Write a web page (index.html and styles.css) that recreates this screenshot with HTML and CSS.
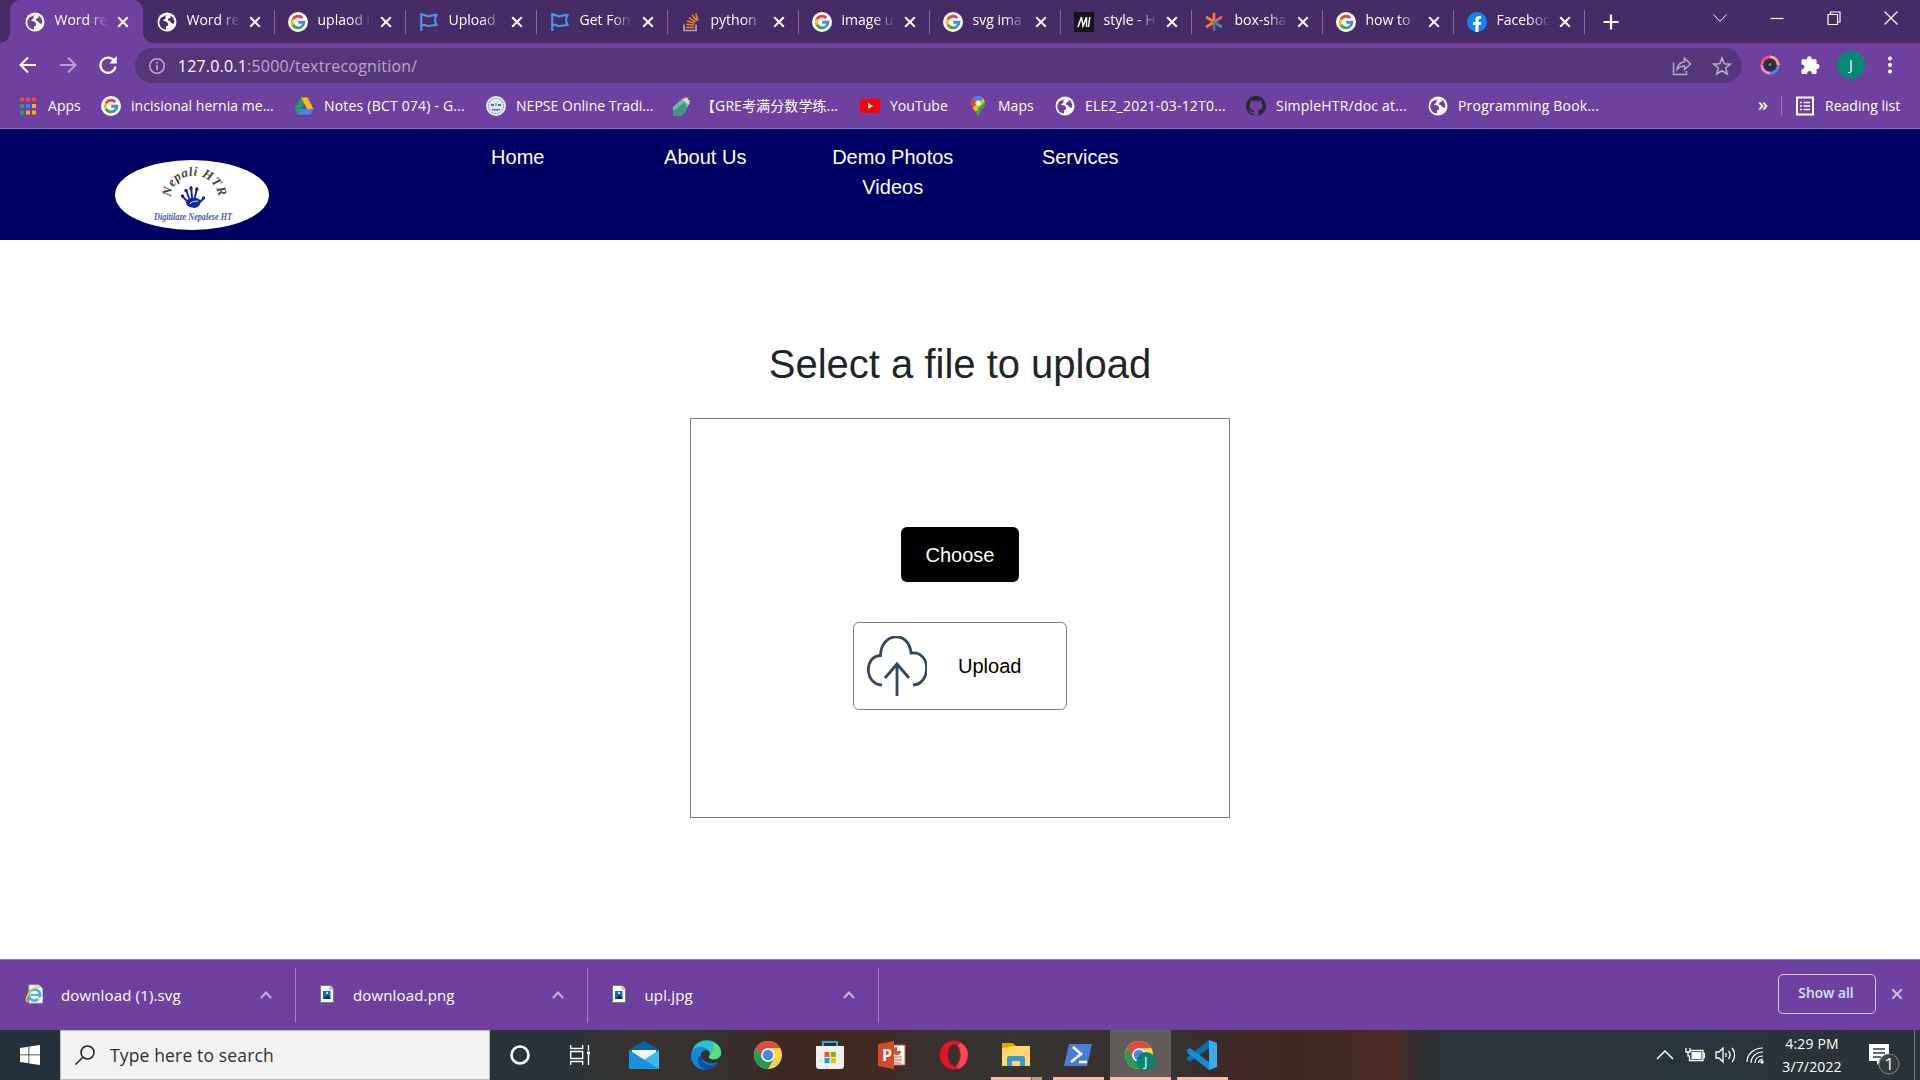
FILE: index.html
```html
<!DOCTYPE html>
<html lang="en">
<head>
<meta charset="utf-8">
<title>Word recognition</title>
<link rel="stylesheet" href="styles.css">
</head>
<body>
<svg class="sprites" width="0" height="0" aria-hidden="true">
  <symbol id="globe" viewBox="0 0 20 20"><circle cx="10" cy="10" r="9.500" fill="#fff"/><path d="M11.500 2.200 8.500 4v2.500L5.800 8.700 9.500 9.600l1.500 2v1.800l-2 1.200v2.900C4.500 17.500 2 13.500 2.300 9.200L4 5.500zM13 3.200l3 2.400 1.500 4-1.200 2.700-2.100-1.500-1.500-1.700-2-.6 1-2.300 2.300-.6z" fill="currentColor"/></symbol>
  <symbol id="google" viewBox="0 0 20 20"><circle cx="10" cy="10" r="10" fill="#fff"/><g fill="none" stroke-width="2.900"><path d="M14.300 6A5.900 5.900 0 0 0 4.900 7.200" stroke="#ea4335"/><path d="M4.900 7.200a5.900 5.900 0 0 0 0 5.600" stroke="#fbbc05"/><path d="M4.900 12.800a5.900 5.900 0 0 0 9 1.700" stroke="#34a853"/><path d="M13.900 14.500a5.800 5.800 0 0 0 2-4.200H10.200" stroke="#4285f4"/></g></symbol>
  <symbol id="flag" viewBox="0 0 20 20"><path d="M2.200 1v18M2.200 3.500c3-2 5 1.500 8 .8 2.500-.6 4-1.600 7.300-1.300-2 3.500-2 6.500 0 10-4 0-4.500.8-7.500 1s-4-2.200-7.800-.5" fill="none" stroke="#4a94e6" stroke-width="2.200"/></symbol>
  <symbol id="stack" viewBox="0 0 20 20"><path d="M3 12.500V18.500H15V12.500" fill="none" stroke="#a9a6b4" stroke-width="1.700"/><path d="M5 15.500h8M5.100 12.300l8 .9M6 8.900l7.500 2.400M8 5.600l6.500 4.300M11 2.800l4.900 6M14.800 1.500l2 7.300" stroke="#f48024" stroke-width="1.600"/></symbol>
  <symbol id="mlogo" viewBox="0 0 20 20"><path d="M0 0h20v20H0z" fill="#15141a"/><path d="M4 15 7.500 5l1.500 9L12.500 5v10M15.800 5l-1.300 10" fill="none" stroke="#fff" stroke-width="1.500"/></symbol>
  <symbol id="spark" viewBox="0 0 20 20"><g stroke-width="2.700" stroke-linecap="round"><path d="M9 10V2" stroke="#ff774b"/><path d="M9 10V18" stroke="#8a5c91"/><path d="M9 10 2 5.500M9 10 2 14.500" stroke="#ff7b2e"/><path d="M9 10l7-4.500" stroke="#ee5b63"/><path d="m9 10 7 4.500" stroke="#2f9ba2"/></g></symbol>
  <symbol id="facebook" viewBox="0 0 20 20"><circle cx="10" cy="10" r="10" fill="#0e86f5"/><path d="M8.400 20v-7H6v-2.900h2.400V8c0-2.600 1.500-3.900 3.800-3.900l2 .2v2.500h-1.200c-1.100 0-1.500.7-1.500 1.500v1.800h2.700L13.700 13h-2.200v7z" fill="#fff"/></symbol>
  <symbol id="x" viewBox="0 0 12 12"><path d="m1.200 1.200 9.600 9.600m0-9.600-9.600 9.600" fill="none" stroke="currentColor" stroke-width="2"/></symbol>
  <symbol id="chev" viewBox="0 0 14 10"><path d="m2 8 5-5.500L12 8" fill="none" stroke="currentColor" stroke-width="2"/></symbol>
  <symbol id="picfile" viewBox="0 0 20 20"><path d="M1.500 1.500h9.500l3.500 3.500v13.500h-13z" fill="#fff" stroke="#777b76"/><path d="M11 1.500V5h3.500" fill="#eee" stroke="#999"/><path d="M4 7h7.500v8H4z" fill="#126ab1"/><path d="m4 15 4.500-4 3 3v1z" fill="#062e64"/><circle cx="8" cy="9" r="1.200" fill="#9eefff"/></symbol>
  <symbol id="chrome" viewBox="0 0 28 28"><circle cx="14" cy="14" r="14" fill="#ffd34d"/><path d="M1.900 7A14 14 0 0 1 26.100 7H14a7 7 0 0 0-6 10.500z" fill="#dc4b3f"/><path d="M1.900 7A14 14 0 0 0 14 28l6-10.500a7 7 0 0 1-12 0z" fill="#1e9c58"/><circle cx="14" cy="14" r="6.600" fill="#fff"/><circle cx="14" cy="14" r="5.300" fill="#4a86f7"/></symbol>
</svg>

<header class="browser">
  <div class="tabstrip">
    <div class="tab active"><svg class="fav"><use href="#globe"/></svg><span class="tab-title">Word re</span><svg class="tab-x"><use href="#x"/></svg></div>
    <div class="tab"><svg class="fav"><use href="#globe"/></svg><span class="tab-title">Word re</span><svg class="tab-x"><use href="#x"/></svg></div>
    <div class="tab"><svg class="fav"><use href="#google"/></svg><span class="tab-title">uplaod i</span><svg class="tab-x"><use href="#x"/></svg></div>
    <div class="tab"><svg class="fav"><use href="#flag"/></svg><span class="tab-title">Upload</span><svg class="tab-x"><use href="#x"/></svg></div>
    <div class="tab"><svg class="fav"><use href="#flag"/></svg><span class="tab-title">Get Fon</span><svg class="tab-x"><use href="#x"/></svg></div>
    <div class="tab"><svg class="fav"><use href="#stack"/></svg><span class="tab-title">python</span><svg class="tab-x"><use href="#x"/></svg></div>
    <div class="tab"><svg class="fav"><use href="#google"/></svg><span class="tab-title">image u</span><svg class="tab-x"><use href="#x"/></svg></div>
    <div class="tab"><svg class="fav"><use href="#google"/></svg><span class="tab-title">svg ima</span><svg class="tab-x"><use href="#x"/></svg></div>
    <div class="tab"><svg class="fav"><use href="#mlogo"/></svg><span class="tab-title">style - H</span><svg class="tab-x"><use href="#x"/></svg></div>
    <div class="tab"><svg class="fav"><use href="#spark"/></svg><span class="tab-title">box-sha</span><svg class="tab-x"><use href="#x"/></svg></div>
    <div class="tab"><svg class="fav"><use href="#google"/></svg><span class="tab-title">how to</span><svg class="tab-x"><use href="#x"/></svg></div>
    <div class="tab"><svg class="fav"><use href="#facebook"/></svg><span class="tab-title">Faceboo</span><svg class="tab-x"><use href="#x"/></svg></div>
    <svg class="plus" viewBox="0 0 16 16"><path d="M8 .5v15M.5 8h15" stroke="#fff" stroke-width="2.200"/></svg>
    <div class="window-controls">
      <svg viewBox="0 0 14 14"><path d="m.5 3.500 6.500 7 6.500-7" fill="none" stroke="#fff"/></svg>
      <svg viewBox="0 0 14 14"><path d="M.5 7.500h13" stroke="#fff" stroke-width="1.200"/></svg>
      <svg viewBox="0 0 14 14"><path d="M1 3.500h9.500V13.500H1zM3.500 3V1h9.500v10H11" fill="none" stroke="#fff" stroke-width="1.200"/></svg>
      <svg viewBox="0 0 14 14"><path d="m.5.5 13 13m0-13-13 13" stroke="#fff" stroke-width="1.200"/></svg>
    </div>
  </div>

  <div class="toolbar">
    <div class="nav-buttons">
      <svg viewBox="0 0 20 20"><path d="M18 10H3M10 2.500 2.500 10l7.500 7.500" fill="none" stroke="#fff" stroke-width="2"/></svg>
      <svg viewBox="0 0 20 20" class="dim"><path d="M2 10h15M10 2.500l7.500 7.500-7.500 7.500" fill="none" stroke="#fff" stroke-width="2"/></svg>
      <svg viewBox="0 0 20 20"><path d="M16.500 6.200A7.600 7.600 0 1 0 17.500 11.500" fill="none" stroke="#fff" stroke-width="2.200"/><path d="M18.700 1v7.500h-7.500z" fill="#fff"/></svg>
    </div>
    <div class="omnibox">
      <svg class="info" viewBox="0 0 18 18"><circle cx="9" cy="9" r="7.300" fill="none" stroke="#b7aac5" stroke-width="1.600"/><path d="M9 8v5M9 4.800v1.800" stroke="#b7aac5" stroke-width="1.800"/></svg>
      <span class="url">127.0.0.1<span class="url-path">:5000/textrecognition/</span></span>
      <svg class="omni-icon" viewBox="0 0 20 20"><path d="M1.500 6.500v12h13v-3.500M5 13.500c.5-4.500 3-7.300 7.500-7.600V2.200l6 5.800-6 5.600v-3.500c-3.500 0-5.500 1-7.500 3.400z" fill="none" stroke="#b7aac5" stroke-width="1.500"/></svg>
      <svg class="omni-icon" viewBox="0 0 20 20"><path d="m10 2 2.300 5.700 6 .4-4.600 3.900 1.500 6L10 14.700 4.800 18l1.500-6-4.600-3.900 6-.4z" fill="none" stroke="#b7aac5" stroke-width="1.600"/></svg>
    </div>
    <div class="extensions">
      <svg viewBox="0 0 20 20"><circle cx="10" cy="10" r="9.500" fill="#ff5276"/><path d="M10 .5a9.500 9.500 0 0 1 9.500 9.500H10z" fill="#ffab88"/><path d="M19.500 10A9.500 9.500 0 0 1 10 19.500V10z" fill="#5b7df5"/><path d="M10 19.500A9.500 9.500 0 0 1 .5 10H10z" fill="#ef8cc7"/><circle cx="10" cy="10" r="6.800" fill="#332f3d"/><circle cx="10" cy="10" r="3.500" fill="#1c2e40"/><circle cx="10" cy="9.500" r="1.500" fill="#5299ae"/></svg>
      <svg viewBox="0 0 20 20"><path d="M7 3.500a2.300 2.300 0 0 1 4.600 0v.7h3.700c.8 0 1.300.6 1.300 1.300v3.600h.6a2.400 2.400 0 0 1 0 4.800h-.6v3.800c0 .7-.5 1.300-1.300 1.300h-3.400v-.6a2.400 2.400 0 0 0-4.800 0v.6H2.800c-.8 0-1.300-.6-1.300-1.300v-3.500h.6a2.400 2.400 0 0 0 0-4.800h-.6V5.500c0-.7.500-1.300 1.300-1.300H7z" fill="#fff"/></svg>
      <span class="avatar">J</span>
      <svg viewBox="0 0 20 20"><g fill="#fff"><circle cx="10" cy="3.500" r="2"/><circle cx="10" cy="10" r="2"/><circle cx="10" cy="16.500" r="2"/></g></svg>
    </div>
  </div>

  <nav class="bookmarks">
    <a><svg viewBox="0 0 20 20"><path d="M2 1.500h4v4H2zM8 1.500h4v4H8zM14 1.500h4v4h-4z" fill="#f04438"/><path d="M2 8h4v4H2z" fill="#22a565"/><path d="M8 8h4v4H8z" fill="#2488fa"/><path d="M14 8h4v4h-4zM8 14.500h4v4H8zM14 14.500h4v4h-4z" fill="#fbad17"/><path d="M2 14.500h4v4H2z" fill="#22a565"/></svg>Apps</a>
    <a><svg><use href="#google"/></svg>incisional hernia me...</a>
    <a class="wide"><svg viewBox="0 0 20 20"><path d="M7 1.500h6.500L4.500 18.500 1 13z" fill="#16a765"/><path d="M7 1.500h6.500L19.500 13H13z" fill="#ffba00"/><path d="M4.500 13h15l-3 5.500H4.500L1 13z" fill="#4285f4"/><path d="M1 13 7 1.500l3 5.700L4.500 18.500z" fill="#16a765"/><path d="M10 7.500 13 13H7z" fill="#6e41a1"/></svg>Notes (BCT 074) - G...</a>
    <a><svg viewBox="0 0 20 20"><circle cx="10" cy="10" r="10" fill="#e2eaff"/><circle cx="10" cy="10" r="7.600" fill="none" stroke="#678fe8" stroke-dasharray="2 1"/><path d="M5 8h3v2H5zM12 8h3v2h-3zM6 13h8v1.500H6z" fill="#4971dc"/><path d="M9 7h2v3H9z" fill="#83a6ed"/></svg>NEPSE Online Tradi...</a>
    <a class="cjk"><svg viewBox="0 0 20 20"><path d="m1 11 9-8 8 3-5 10-4 3.500H1z" fill="#61c2a9"/><path d="M1 15 13 6l2 7-6 6.500H1z" fill="#43967d"/><path d="m10 3 6-2 2 1-1 7-4-3z" fill="#e8d7b5"/><path d="m15 1.300 3 .7-.5 3z" fill="#403b37"/></svg>【GRE考满分数学练...</a>
    <a><svg viewBox="0 0 20 20"><rect y="3" width="20" height="14" rx="3" fill="#f00"/><path d="m8 7 5 3-5 3z" fill="#fff"/></svg>YouTube</a>
    <a><svg viewBox="0 0 20 20"><path d="M10 0a7 7 0 0 1 7 7c0 5-5 6-6.200 13h-1.600C8 14 3 12 3 7a7 7 0 0 1 7-7z" fill="#34a853"/><path d="M3 7a7 7 0 0 1 2-5l5 4-5.500 6C3.500 10.500 3 9 3 7z" fill="#ea4335"/><path d="M5 2a7 7 0 0 1 10-.1L10 7z" fill="#4285f4"/><path d="M4.500 12 15.500 2.500 17 7 7.500 15.500z" fill="#fbbc04"/><path d="m10 12 6.900-6c.5 5-3.900 6-5.700 10z" fill="#34a853"/><circle cx="10" cy="7" r="2.500" fill="#fff"/></svg>Maps</a>
    <a class="wide"><svg><use href="#globe"/></svg>ELE2_2021-03-12T0...</a>
    <a class="wide"><svg viewBox="0 0 16 16"><path fill="#24292f" d="M8 0C3.580 0 0 3.580 0 8c0 3.540 2.290 6.530 5.470 7.590.4.070.55-.17.55-.38 0-.19-.01-.82-.01-1.490-2.010.37-2.530-.49-2.690-.94-.09-.23-.48-.94-.82-1.130-.28-.15-.68-.52-.01-.53.63-.01 1.080.58 1.230.82.72 1.210 1.870.87 2.330.66.07-.52.28-.87.51-1.070-1.780-.2-3.640-.89-3.640-3.950 0-.87.31-1.590.82-2.150-.08-.2-.36-1.020.08-2.120 0 0 .67-.21 2.200.82a7.600 7.600 0 0 1 4 0c1.530-1.040 2.200-.82 2.200-.82.44 1.100.16 1.920.08 2.120.51.56.82 1.270.82 2.150 0 3.070-1.870 3.750-3.650 3.950.29.25.54.73.54 1.480 0 1.070-.01 1.930-.01 2.200 0 .21.15.46.55.38A8 8 0 0 0 8 0z"/></svg>SimpleHTR/doc at...</a>
    <a class="wide"><svg><use href="#globe"/></svg>Programming Book...</a>
    <span class="more">»</span>
    <a class="reading"><svg viewBox="0 0 20 20"><path d="M2 1.500h16v17H2z" fill="none" stroke="#fff" stroke-width="2"/><path d="M5 6.500h2M5 10h2M5 13.500h2M8.500 6.500H15M8.500 10H15M8.500 13.500H15" stroke="#fff" stroke-width="1.700"/></svg>Reading list</a>
  </nav>
</header>

<main class="page">
  <div class="site-nav">
    <div class="logo">
      <svg viewBox="0 0 154 70">
        <path id="arc" d="M56 37C57 8 102 8 104 40" fill="none"/>
        <text class="logo-arc"><textPath href="#arc" textLength="70">Nepali HTR</textPath></text>
        <g fill="none" stroke="#1426a0" stroke-linecap="round" stroke-width="2"><path d="m72 41-5-5M74 38l-3-8M77 37l-1-10M80 37l2-9M84 43l5-5"/></g>
        <g fill="#1426a0"><circle cx="67.500" cy="36" r="1.700"/><circle cx="71" cy="30.500" r="1.700"/><circle cx="76" cy="28.500" r="1.700"/><circle cx="81.800" cy="29.500" r="1.700"/><circle cx="88.500" cy="38" r="1.700"/></g>
        <path d="M71 42c3-6 11-5 14-2 2 5-3 8-6 8-5-1-8-2-8-6z" fill="#1426a0"/><path d="M75 44c3-4 6-2 8-3" fill="none" stroke="#fff"/>
        <text class="logo-sub" x="39" y="59.500" textLength="78" lengthAdjust="spacingAndGlyphs">Digitilaze Nepalese HT</text>
      </svg>
    </div>
    <div class="links"><a>Home</a><a>About Us</a><a>Demo Photos Videos</a><a>Services</a></div>
  </div>
  <h1>Select a file to upload</h1>
  <section class="dropbox">
    <div class="choose">Choose</div>
    <div class="upload">
      <svg viewBox="0 0 60 60"><g fill="none" stroke="#34495e" stroke-width="2.800"><path d="M15 49C-3 48-3 20 13.500 19.500C14-4 42-6 44 17C64 14 65 48 46 49"/><path d="M30 60V28M18 42l12-14 12 14"/></g></svg>
      <span>Upload</span>
    </div>
  </section>
</main>

<footer class="downloads">
  <div class="dl"><svg class="file" viewBox="0 0 20 20"><path d="M4 1h10l3.500 3.500V19H4z" fill="#fff" stroke="#bbb"/><circle cx="9.500" cy="11" r="5.500" fill="none" stroke="#46b4e8" stroke-width="3"/><path d="M6 11h9" stroke="#46b4e8" stroke-width="2"/><path d="M13 13.500h5v2h-5z" fill="#fff"/><path d="M2.500 18C-1 14 8 1 15 3" fill="none" stroke="#f4c928" stroke-width="1.700"/></svg><span>download (1).svg</span><svg class="chev"><use href="#chev"/></svg></div>
  <div class="dl"><svg class="file"><use href="#picfile"/></svg><span>download.png</span><svg class="chev"><use href="#chev"/></svg></div>
  <div class="dl"><svg class="file"><use href="#picfile"/></svg><span>upl.jpg</span><svg class="chev"><use href="#chev"/></svg></div>
  <div class="show-all">Show all</div>
  <svg class="dl-close"><use href="#x"/></svg>
</footer>

<div class="taskbar">
  <div class="start"><svg viewBox="0 0 20 20"><path d="M0 3 8.500 1.700v7.800H0zM9.300 1.600 20 0v9.500H9.300zM0 10.300h8.500v8L0 17zM9.300 10.300H20V20L9.300 18.400z" fill="#fff"/></svg></div>
  <div class="search"><svg viewBox="0 0 20 20"><circle cx="12.500" cy="7.500" r="6.500" fill="none" stroke="#222" stroke-width="1.500"/><path d="m8 12-7.500 7.500" stroke="#222" stroke-width="1.500"/></svg>Type here to search</div>
  <div class="apps">
    <span class="app"><svg class="small" viewBox="0 0 20 20"><circle cx="10" cy="10" r="8.500" fill="none" stroke="#fff" stroke-width="2.600"/></svg></span>
    <span class="app view"><svg class="small" viewBox="0 0 20 20"><path d="M.7 0v3.500h12V0M.7 20v-3.500h12V20M.7 6.500h12v7H.7zM18.500 0v5.500M18.500 10v10" fill="none" stroke="#fff" stroke-width="1.300"/><path d="M17 6.500h3v3h-3z" fill="#fff"/></svg></span>
    <span class="app"><svg viewBox="0 0 30 30"><path d="m0 10 15-9 15 9v4H0z" fill="#0864ae"/><path d="M3 10h24v12H3z" fill="#f4f4f4"/><path d="m0 10 15 10L30 10v19H0z" fill="#35bdef"/><path d="m0 10 30 19H0z" fill="#1593df"/></svg></span>
    <span class="app"><svg viewBox="0 0 30 30"><path d="M1 12C4-3 27-4 30 12c.5 6-5 8-10 7-2-1-3-2-1-4 1-7-12-9-18-3z" fill="#2cc3cf"/><path d="M22 2c6 2 8 7 8 10 .5 6-5 8-10 7-2-1-3-2-1-4 3-3 4-8 3-13z" fill="#5cdd75"/><path d="M0 15c0-8 12-11 17-5-9-1-9 9-2 12 4 2 8 2 12 0C20 34 0 32 0 15z" fill="#1485d7"/><path d="M11 15c-1 10 8 13 17 7C22 31 12 31 8 25c-3-5-1-9 3-10z" fill="#0c4fa0"/></svg></span>
    <span class="app"><svg class="chrome"><use href="#chrome"/></svg></span>
    <span class="app"><svg viewBox="0 0 30 30"><path d="M8 7V2h14v5" fill="none" stroke="#1badef" stroke-width="2.200"/><path d="M1 6h28v20a3 3 0 0 1-3 3H4a3 3 0 0 1-3-3z" fill="#f1f1f1"/><path d="M9.500 12h5v5h-5z" fill="#f25022"/><path d="M15.800 12h5v5h-5z" fill="#7fba00"/><path d="M9.500 18h5v5h-5z" fill="#00a4ef"/><path d="M15.800 18h5v5h-5z" fill="#ffb900"/></svg></span>
    <span class="app"><svg viewBox="0 0 30 30"><path d="M13 5h15v20H13z" fill="#fff" stroke="#d65030"/><path d="M20 7a4 4 0 1 0 4 4h-4z" fill="#d65030"/><path d="M17 17h8M17 20h8M17 23h7" stroke="#d65030"/><path d="m1 4 16-3v28L1 26z" fill="#d24a27"/><text x="5" y="21" class="ppt">P</text></svg></span>
    <span class="app"><svg viewBox="0 0 30 30"><ellipse cx="15" cy="15" rx="14.200" ry="14.500" fill="#e31525"/><path d="M20 29c10-5 12-20 2-26l-3 2c4 6 4 15-1 21z" fill="#ff4b58"/><ellipse cx="15" cy="15" rx="6" ry="11" fill="#3a302d"/></svg></span>
    <span class="app files"><svg viewBox="0 0 30 30"><path d="M1 3h11l3 3h14v20H1z" fill="#e6a000"/><path d="M1 8 13 6h16v20H1z" fill="#ffd76a"/><path d="M6 26V18a2 2 0 0 1 2-2h14a2 2 0 0 1 2 2v8h-5v-5h-8v5z" fill="#3e95d5"/></svg></span>
    <span class="app running"><svg viewBox="0 0 30 30"><path d="M6 4h23l-5 22H1z" fill="#487ddd"/><path d="m10 7 8 7-10 8M16 22h8" fill="none" stroke="#fff" stroke-width="2.500"/></svg></span>
    <span class="app running current"><svg viewBox="0 0 30 30"><use href="#chrome" x="0" y="1" width="28" height="28"/><circle cx="21" cy="21.500" r="9.500" fill="#07836f"/><text x="19" y="26" class="badge-j">J</text></svg></span>
    <span class="app running"><svg viewBox="0 0 30 30"><path d="M22 0v8L3 22l-3-2v-2.500z" fill="#0c6fb5"/><path d="M0 10l3-2 19 14v8L0 12.500z" fill="#168bd3"/><path d="M22 0 30 3v24l-8 3z" fill="#35adf1"/></svg></span>
  </div>
  <div class="tray">
    <svg viewBox="0 0 20 20"><path d="m2 14 8-8 8 8" fill="none" stroke="#fff" stroke-width="1.500"/></svg>
    <svg viewBox="0 0 20 20"><path d="M5 5.500h13v10H4.500V11M18 8.500h1.500v4H18M1 3v4h4V3M3 7v4h2" fill="none" stroke="#fff" stroke-width="1.300"/><path d="M6.500 7h10v7h-10z" fill="#fff"/></svg>
    <svg viewBox="0 0 20 20"><path d="M1 7h3l4-4v14l-4-4H1zM11 8v4M13.500 6c2 2.500 2 5.500 0 8M17 3c3.500 4 3.500 10 0 14" fill="none" stroke="#fff" stroke-width="1.300"/></svg>
    <svg viewBox="0 0 20 20"><g fill="none" stroke="#fff" stroke-width="1.200"><path d="M2 17C2 9 9 3 18 3M6 18c0-6 5-11 12-11M10 18c0-4 3-7 8-7M13.500 18c0-2 2-4 4.500-4"/></g><circle cx="17" cy="17" r="1.700" fill="#fff"/></svg>
    <div class="clock"><span>4:29 PM</span><span>3/7/2022</span></div>
    <svg class="notif" viewBox="0 0 32 32"><path d="M0 0h20v17h-8l-4 4v-4H0z" fill="#fff"/><path d="M4 5h12M4 9h12M4 13h8" stroke="#333c40" stroke-width="1.300"/><circle cx="20" cy="20" r="10" fill="#313b3f" fill-opacity=".93" stroke="#888"/><text x="15.500" y="26" class="count">1</text></svg>
  </div>
</div>
</body>
</html>
```
FILE: styles.css
```css
* { box-sizing: border-box; }
body { margin: 0; width: 1920px; height: 1080px; overflow: hidden; display: flex; flex-direction: column; background: #fff; font-family: "Open Sans", "Noto Sans CJK SC", sans-serif; font-size: 14px; color: #fff; }
svg { flex: none; display: block; }
.sprites { display: none; }

.browser { height: 129px; background: #6e41a1; border-bottom: 1px solid #9674bb; }
.tabstrip { height: 43px; background: #472b66; display: flex; align-items: center; padding-left: 12px; }
.tab { width: 131px; height: 43px; display: flex; align-items: center; padding-left: 14px; position: relative; }
.tab::after { content: ""; position: absolute; right: -1px; top: 10px; width: 1px; height: 24px; background: #8a699f; }
.tab.active { width: 133px; margin: 0 0 0 -2px; padding-left: 15px; background: #6e41a1; border-radius: 10px 10px 0 0; }
.tab.active::before, .tab.active::after { content: ""; position: absolute; top: auto; bottom: 0; width: 10px; height: 10px; }
.tab.active::before { left: -10px; background: radial-gradient(circle at 0 0, transparent 9.500px, #6e41a1 10px); }
.tab.active::after { right: -10px; background: radial-gradient(circle at 100% 0, transparent 9.500px, #6e41a1 10px); }
.fav { width: 20px; height: 20px; color: #472b66; }
.active .fav { color: #6e41a1; }
.tab-title { width: 53px; height: 22px; line-height: 20px; margin: -1px 0 0 9.500px; white-space: nowrap; -webkit-mask-image: linear-gradient(90deg, #000 60%, transparent); mask-image: linear-gradient(90deg, #000 60%, transparent); }
.tab-x { width: 12px; height: 12px; margin-left: 9px; }
.plus { width: 16px; height: 16px; margin-left: 19px; }
.window-controls { display: flex; gap: 43px; margin: -7px 22px 0 auto; }
.window-controls svg { width: 14px; height: 14px; }

.toolbar { height: 44px; display: flex; align-items: center; }
.nav-buttons { width: 135px; padding-left: 18px; display: flex; gap: 20px; }
.nav-buttons svg { width: 20px; height: 20px; }
.dim { opacity: .5; }
.omnibox { width: 1610px; height: 35px; margin-top: 1px; border-radius: 18px; background: #56367a; display: flex; align-items: center; padding: 0 12px 0 13px; }
.info { width: 18px; height: 18px; }
.url { flex: 1; margin-left: 12px; font-size: 16px; letter-spacing: .2px; }
.url-path { color: #bba6d2; }
.omni-icon { width: 20px; height: 20px; margin-left: 20px; }
.omnibox .omni-icon:last-child { margin-right: -2px; }
.extensions { flex: 1; display: flex; align-items: center; padding-left: 18px; }
.extensions svg { width: 20px; height: 20px; margin-right: 20px; }
.extensions svg:nth-child(2) { margin-right: 17px; }
.avatar { width: 28px; height: 28px; border-radius: 50%; background: #078776; text-align: center; line-height: 28px; margin-right: 15px; }

.bookmarks { height: 37px; display: grid; grid-template-columns: 83px 193px 192px 186px 188px 108px 87px 191px 182px 326px 27px 1fr; padding-left: 18px; align-items: center; }
.bookmarks a { display: flex; align-items: center; gap: 10px; white-space: nowrap; line-height: 20px; letter-spacing: .03px; }
.bookmarks .wide { letter-spacing: .2px; }
.bookmarks .cjk { gap: 9px; letter-spacing: .1px; }
.bookmarks svg { width: 20px; height: 20px; color: #6e41a1; }
.more { font-size: 18px; font-weight: 600; line-height: 18px; margin-left: 4px; padding-bottom: 4px; }
.bookmarks .reading { border-left: 1px solid #9674bb; padding-left: 13px; height: 20px; }

.page { height: 830px; font-family: "Liberation Sans", Arial, sans-serif; color: #212529; }
.site-nav { height: 111px; background: #000064; display: flex; align-items: flex-start; }
.logo { width: 154px; height: 70px; margin: 31px 0 0 115px; border-radius: 50%; background: #fff; }
.logo svg { width: 154px; height: 70px; }
.logo-arc { font: italic bold 13px "Liberation Serif", serif; fill: #444; }
.logo-sub { font: bold italic 9.500px "Liberation Serif", serif; fill: #4b56b4; }
.links { display: grid; grid-template-columns: repeat(4, 187.5px); margin: 13px 0 0 155px; color: #fff; font-size: 20px; line-height: 30px; text-align: center; }
.links a { padding: 0 32px; }
.page h1 { margin: 100px 0 0; font-size: 40px; line-height: 48px; font-weight: 400; text-align: center; }
.dropbox { width: 540px; height: 400px; margin: 30px auto 0; border: 1px solid #808080; display: flex; flex-direction: column; align-items: center; font-size: 20px; }
.choose { width: 118px; height: 55px; margin-top: 108px; border-radius: 6px; background: #000; color: #fff; text-align: center; line-height: 56px; }
.upload { width: 214px; height: 88px; margin-top: 40px; border: 1px solid #808080; border-radius: 6px; color: #000; display: flex; align-items: center; padding-left: 13px; gap: 31px; }
.upload svg { width: 60px; height: 60px; }

.downloads { height: 71px; background: #6e41a1; border-top: 1px solid #9674bb; display: flex; align-items: center; font-size: 15px; }
.dl { width: 291.5px; height: 55px; border-right: 1px solid #a184c1; display: flex; align-items: center; padding: 0 22px 0 23px; letter-spacing: .15px; }
.dl:first-child { width: 296px; padding-left: 25px; }
.file { width: 20px; height: 20px; margin-top: -3px; }
.dl span { flex: 1; margin-left: 14px; }
.dl:first-child span { margin-left: 16px; }
.chev { width: 14px; height: 10px; color: #c5b5d5; }
.show-all { margin-left: auto; width: 98px; height: 40px; border: 1px solid #d8cce4; border-radius: 5px; color: #d5e5ff; font-size: 13.800px; font-weight: 600; line-height: 36px; text-align: center; padding-right: 2px; }
.downloads .show-all, .downloads .dl-close { position: relative; top: -1px; }
.dl-close { width: 12px; height: 12px; margin: 0 17px 0 15px; color: #cbbcd8; }

.taskbar { height: 50px; display: flex; background: linear-gradient(90deg, #25313a 0, #28333a 560px, #39322e 640px, #34312f 720px, #3d2925 770px, #422820 860px, #3a302d 920px, #343431 1010px, #39302d 1120px, #35322f 1170px, #402825 1240px, #402822 1300px, #4a2b24 1395px, #352f30 1415px, #29343b 1445px, #28353a 1720px, #2a3238 1915px); }
.start { width: 60px; padding: 15px 0 0 20px; }
.start svg { width: 20px; height: 20px; }
.search { width: 430px; background: #f2f2f2; border: 1px solid #bbb; display: flex; align-items: center; padding-left: 14px; gap: 15px; color: #303030; font-size: 17.5px; letter-spacing: .15px; }
.search svg { width: 20px; height: 20px; }
.apps { display: flex; margin-left: -1px; }
.app { width: 62px; height: 50px; display: flex; align-items: center; justify-content: center; }
.app.view { padding-right: 4px; }
.app svg { width: 30px; height: 30px; }
.app .small { width: 20px; height: 20px; }
.app .chrome { width: 28px; height: 28px; }
.running, .files { background: linear-gradient(#ffb8ab, #ffb8ab) 6px 47px / 51px 3px no-repeat; }
.files { background: linear-gradient(90deg, #ffb8ab 40px, #6f5953 40px, #6f5953 41px, #c99488 41px) 6px 47px / 51px 3px no-repeat; }
.current { background: linear-gradient(#ffb8ab, #ffb8ab) 1px 47px / 61px 3px no-repeat, linear-gradient(#625d5b, #625d5b) 1px 0 / 61px 50px no-repeat; }
.ppt { font: bold 16px "Open Sans", sans-serif; fill: #fff; }
.badge-j { font: 13px "Open Sans", sans-serif; fill: #fff; }
.tray { margin-left: auto; width: 265px; display: flex; align-items: center; border-right: 1px solid #737c80; margin-right: 5px; gap: 10px; padding-left: 5px; }
.tray svg { width: 20px; height: 20px; }
.clock { display: flex; flex-direction: column; width: 74px; text-align: center; font-size: 14px; line-height: 23px; letter-spacing: .15px; }
.tray .notif { width: 32px; height: 32px; margin: 9px 0 0 10px; }
.count { font: 17px "Open Sans", sans-serif; fill: #fff; }
```
